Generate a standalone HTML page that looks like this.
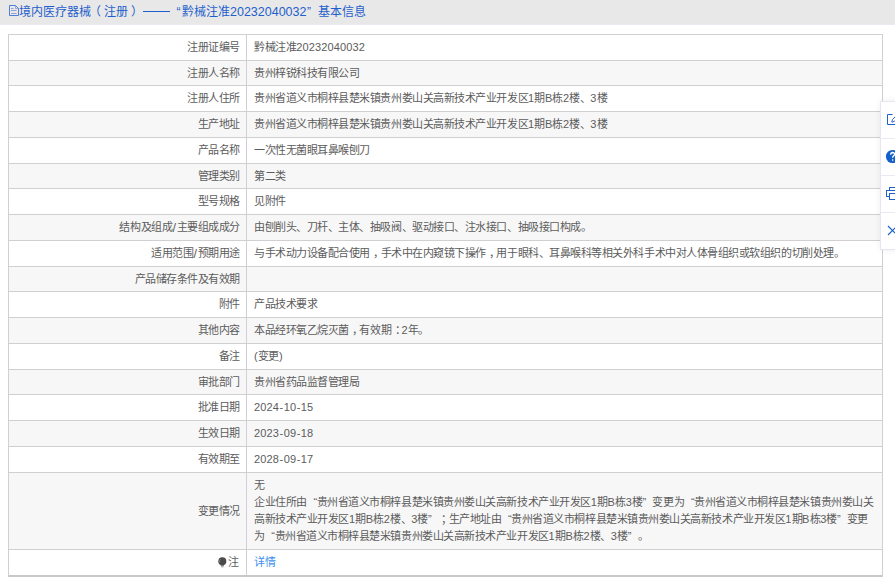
<!DOCTYPE html>
<html lang="zh-CN">
<head>
<meta charset="utf-8">
<style>
html,body{margin:0;padding:0;}
body{width:895px;height:583px;overflow:hidden;position:relative;background:#fff;font-family:"Liberation Sans",sans-serif;color:#5c5c5c;}
.hdr{position:absolute;left:0;top:0;width:895px;height:24px;background:#e8e8e8;border-bottom:1px solid #e9ebf3;}
.ttl{position:absolute;top:4.5px;font-size:12px;line-height:14px;color:#1f5fcc;white-space:nowrap;}
.dash{position:absolute;left:143px;top:11px;width:27px;height:1px;background:#1f5fcc;}
.doc{position:absolute;left:0;top:0;width:24px;height:20px;}
.r{position:absolute;left:8px;width:875px;border-top:1px solid #d1cfd1;box-sizing:border-box;}
.g{background:#f7f7f7;}
.l{position:absolute;left:0;width:232px;top:0.5px;bottom:0;display:flex;align-items:center;justify-content:flex-end;white-space:nowrap;font-size:11px;line-height:17px;letter-spacing:-0.46px;}
.v{position:absolute;left:246px;top:0.5px;bottom:0;display:flex;align-items:center;white-space:nowrap;font-size:11px;line-height:17px;letter-spacing:-0.46px;}
.v.ml{display:block;bottom:auto;}
.l[style]{display:block;bottom:auto;text-align:right;}
.vcol{position:absolute;left:246px;top:34px;width:1px;height:541px;background:#d1cfd1;}
.bleft{position:absolute;left:8px;top:34px;width:1px;height:543px;background:#d1cfd1;}
.bright{position:absolute;left:882px;top:34px;width:1px;height:543px;background:#d1cfd1;}
.tbot{position:absolute;left:8px;top:575px;width:875px;height:2px;background:#c9c7c9;}
.lq{display:inline-block;width:10px;text-align:right;}
.rq{display:inline-block;width:10px;text-align:left;}
.bulb{display:inline-block;vertical-align:-1.5px;margin-right:1.5px;}
.tb{position:absolute;left:880px;top:101px;width:20px;height:147px;background:#fff;border:1px solid #e6e9f3;box-shadow:-2px 1px 6px rgba(0,0,0,0.06);}
.sep{position:absolute;left:0;width:20px;height:1px;background:#e6e9f3;}
.lt{letter-spacing:0.15px;}
.sl{letter-spacing:0;margin:0 0.8px 0 0.3px;font-size:12.5px;line-height:10px;}
.tbs{position:absolute;left:870px;top:95px;}
.tbsh{position:absolute;left:881px;top:102px;width:30px;height:147px;box-shadow:0 0 7px 1px rgba(0,0,0,0.07);}
.l2{width:231px;}
.cp{position:relative;left:3.5px;}
.hy{margin:0 0.4px;}

</style>
</head>
<body>
<div class="hdr">
  <svg class="doc" width="24" height="20" viewBox="0 0 24 20"><path d="M9.5 5.5H15.5L18.5 8.5V15.5H9.5Z" fill="none" stroke="#3f72d6" stroke-width="0.9"/><path d="M15.5 5.5V8.5H18.5" fill="none" stroke="#5a80d6" stroke-width="0.6"/><path d="M11 8.5H13.5M11 10.5H16.5M11 13.5H16.5" stroke="#8797d6" stroke-width="0.9"/></svg>
  <span class="ttl" style="left:19px">境内医疗器械</span>
  <span class="ttl" style="left:89px">（</span>
  <span class="ttl" style="left:103.5px">注册</span>
  <span class="ttl" style="left:130.5px">）</span>
  <span class="dash"></span>
  <span class="ttl" style="left:176.5px">“</span>
  <span class="ttl" style="left:181.5px">黔械注准</span>
  <span class="ttl" style="left:230px;font-size:12.5px">20232040032</span>
  <span class="ttl" style="left:307px">”</span>
  <span class="ttl" style="left:318px">基本信息</span>
</div>

<div class="r" style="top:34px;height:26px"><div class="l">注册证编号</div><div class="v">黔械注准<span class="lt">20232040032</span></div></div>
<div class="r g" style="top:60px;height:25px"><div class="l">注册人名称</div><div class="v">贵州梓锐科技有限公司</div></div>
<div class="r" style="top:85px;height:26px"><div class="l">注册人住所</div><div class="v">贵州省道义市桐梓县楚米镇贵州娄山关高新技术产业开发区<span class="lt">1</span>期<span class="lt">B</span>栋<span class="lt">2</span>楼、<span class="lt">3</span>楼</div></div>
<div class="r g" style="top:111px;height:26px"><div class="l">生产地址</div><div class="v">贵州省道义市桐梓县楚米镇贵州娄山关高新技术产业开发区<span class="lt">1</span>期<span class="lt">B</span>栋<span class="lt">2</span>楼、<span class="lt">3</span>楼</div></div>
<div class="r" style="top:137px;height:26px"><div class="l">产品名称</div><div class="v">一次性无菌眼耳鼻喉刨刀</div></div>
<div class="r g" style="top:163px;height:25px"><div class="l">管理类别</div><div class="v">第二类</div></div>
<div class="r" style="top:188px;height:26px"><div class="l">型号规格</div><div class="v">见附件</div></div>
<div class="r g" style="top:214px;height:26px"><div class="l">结构及组成<span class="sl">/</span>主要组成成分</div><div class="v">由刨削头、刀杆、主体、抽吸阀、驱动接口、注水接口、抽吸接口构成。</div></div>
<div class="r" style="top:240px;height:26px"><div class="l">适用范围<span class="sl">/</span>预期用途</div><div class="v">与手术动力设备配合使用<span class="cp">，</span>手术中在内窥镜下操作<span class="cp">，</span>用于眼科、耳鼻喉科等相关外科手术中对人体骨组织或软组织的切削处理。</div></div>
<div class="r g" style="top:266px;height:25px"><div class="l">产品储存条件及有效期</div><div class="v"></div></div>
<div class="r" style="top:291px;height:26px"><div class="l">附件</div><div class="v">产品技术要求</div></div>
<div class="r g" style="top:317px;height:26px"><div class="l">其他内容</div><div class="v">本品经环氧乙烷灭菌<span class="cp">，</span>有效期<span class="cp">：</span><span class="lt">2</span>年。</div></div>
<div class="r" style="top:343px;height:26px"><div class="l">备注</div><div class="v"><span class="lt">(</span>变更<span class="lt">)</span></div></div>
<div class="r g" style="top:369px;height:25px"><div class="l">审批部门</div><div class="v">贵州省药品监督管理局</div></div>
<div class="r" style="top:394px;height:26px"><div class="l">批准日期</div><div class="v"><span class="lt">2024<span class="hy">-</span>10<span class="hy">-</span>15</span></div></div>
<div class="r g" style="top:420px;height:26px"><div class="l">生效日期</div><div class="v"><span class="lt">2023<span class="hy">-</span>09<span class="hy">-</span>18</span></div></div>
<div class="r" style="top:446px;height:26px"><div class="l">有效期至</div><div class="v"><span class="lt">2028<span class="hy">-</span>09<span class="hy">-</span>17</span></div></div>
<div class="r g" style="top:472px;height:77px"><div class="l" style="top:30.00px">变更情况</div><div class="v ml" style="top:4.2px">无<br>企业住所由<span class="lq">“</span>贵州省道义市桐梓县楚米镇贵州娄山关高新技术产业开发区<span class="lt">1</span>期<span class="lt">B</span>栋<span class="lt">3</span>楼<span class="rq">”</span>变更为<span class="lq">“</span>贵州省道义市桐梓县楚米镇贵州娄山关<br>高新技术产业开发区<span class="lt">1</span>期<span class="lt">B</span>栋<span class="lt">2</span>楼、<span class="lt">3</span>楼<span class="rq">”</span><span class="cp">；</span>生产地址由<span class="lq">“</span>贵州省道义市桐梓县楚米镇贵州娄山关高新技术产业开发区<span class="lt">1</span>期<span class="lt">B</span>栋<span class="lt">3</span>楼<span class="rq">”</span>变更<br>为<span class="lq">“</span>贵州省道义市桐梓县楚米镇贵州娄山关高新技术产业开发区<span class="lt">1</span>期<span class="lt">B</span>栋<span class="lt">2</span>楼、<span class="lt">3</span>楼<span class="rq">”</span>。</div></div>
<div class="r" style="top:549px;height:26px"><div class="l l2"><svg class="bulb" width="9" height="11" viewBox="0 0 9 11"><circle cx="4.3" cy="4.2" r="4" fill="#4a4a4a"/><path d="M2.2 2.3Q1.2 3.6 1.6 5.2" stroke="#888" stroke-width="0.9" fill="none"/><rect x="2.8" y="8" width="3" height="1.2" fill="#777"/><rect x="3.1" y="9.3" width="2.4" height="1" fill="#999"/></svg>注</div><div class="v"><span style="color:#3d8ff0">详情</span></div></div>
<div class="tbot"></div>
<div class="vcol"></div>
<div class="bleft"></div>
<div class="bright"></div>
<div class="tbsh"></div>
<svg class="tbs" width="25" height="160" viewBox="870 95 25 160">
  <rect x="880.5" y="101.5" width="20" height="148" fill="#fff" stroke="#e4e7f2" stroke-width="1"/>
  <path d="M881 138.5H895M881 175.5H895M881 212.5H895" stroke="#e8ebf5" stroke-width="1"/>
  <path d="M892.5 114.5H887.5V124.5H897" fill="none" stroke="#1b62cc" stroke-width="1"/>
  <path d="M891.8 122.2L892.4 119.6L896.2 115.8L898 117.6L894.2 121.4Z" fill="#fff" stroke="#3a5fd0" stroke-width="1"/>
  <circle cx="892.5" cy="156.5" r="6.6" fill="#1560c8"/>
  <path d="M890.6 154.6Q890.8 152.5 892.7 152.5Q894.6 152.6 894.5 154.3Q894.4 155.4 893.3 156.1Q892.6 156.6 892.6 157.8" fill="none" stroke="#fff" stroke-width="1.3"/>
  <rect x="892" y="159.3" width="1.3" height="1.4" fill="#fff"/>
  <rect x="889.5" y="187.5" width="8" height="3" fill="none" stroke="#1b62cc" stroke-width="1"/>
  <rect x="886.5" y="190.5" width="12" height="6" fill="#fff" stroke="#1b62cc" stroke-width="1"/>
  <rect x="889.5" y="193.5" width="8" height="6" fill="#fff" stroke="#1b62cc" stroke-width="1"/>
  <path d="M888 226L897 235M888 235L897 226" stroke="#1b62cc" stroke-width="1.2"/>
</svg>

</body>
</html>
